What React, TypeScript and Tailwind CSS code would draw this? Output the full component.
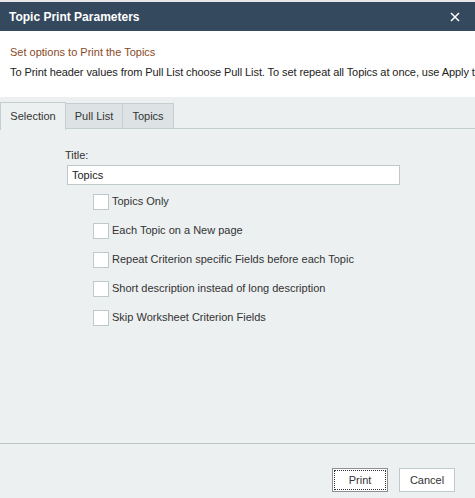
import React from "react";

const font = { fontFamily: '"Liberation Sans", Arial, sans-serif' };

function Check({ label }: { label: string }) {
  return (
    <div className="flex items-center h-[29px]">
      <div className="w-[16px] h-[16px] bg-white border border-[#bfc9cb] mr-[3px]" />
      <span className="text-[11px] text-[#333]">{label}</span>
    </div>
  );
}

export default function App() {
  return (
    <div className="w-[475px] h-[498px] flex flex-col bg-[#ecf0f1] overflow-hidden" style={font}>
      <div className="h-[2px] bg-[#e6e6e6] shrink-0" />
      <div className="h-[29px] bg-[#34495e] flex items-center justify-between pl-[9px] pr-[15px] shrink-0">
        <span className="text-white font-bold text-[12px]">Topic Print Parameters</span>
        <svg width="10" height="10" viewBox="0 0 10 10">
          <path d="M1 1L9 9M9 1L1 9" stroke="white" strokeWidth="1.5" />
        </svg>
      </div>
      <div className="h-[66px] bg-white px-[10px] pt-[14px] shrink-0 whitespace-nowrap overflow-hidden">
        <div className="text-[11px] text-[#8b4a1f] leading-[14px]">Set options to Print the Topics</div>
        <div className="text-[11px] text-[#222] leading-[14px] mt-[6px] tracking-[-0.08px]">
          To Print header values from Pull List choose Pull List. To set repeat all Topics at once, use Apply to all
        </div>
      </div>
      <div className="flex items-end h-[32px] pt-[4px] shrink-0">
        <div className="h-[28px] w-[66px] border border-b-0 border-[#c4cdd0] bg-[#ecf0f1] flex items-center justify-center text-[11px] text-[#333] relative top-[1px]">
          Selection
        </div>
        <div className="h-[26px] w-[57px] border border-l-0 border-[#c4cdd0] bg-[#dde3e5] flex items-center justify-center text-[11px] text-[#333]">
          Pull List
        </div>
        <div className="h-[26px] w-[51px] border border-l-0 border-[#c4cdd0] bg-[#dde3e5] flex items-center justify-center text-[11px] text-[#333]">
          Topics
        </div>
        <div className="flex-1 border-b border-[#c4cdd0]" />
      </div>
      <div className="flex-1 flex flex-col">
        <div className="pl-[65px] pt-[19px]">
          <div className="text-[11px] text-[#333] leading-[14px]">Title:</div>
          <div className="mt-[3px] ml-[2px] w-[333px] h-[20px] bg-white border border-[#bfc9cb] flex items-center px-[4px] text-[11px] text-[#222]">
            Topics
          </div>
          <div className="pl-[28px] pt-[2px]">
            <Check label="Topics Only" />
            <Check label="Each Topic on a New page" />
            <Check label="Repeat Criterion specific Fields before each Topic" />
            <Check label="Short description instead of long description" />
            <Check label="Skip Worksheet Criterion Fields" />
          </div>
        </div>
        <div className="flex-1" />
        <div className="h-[1px] bg-[#bcc5c7]" />
        <div className="h-[54px] flex justify-end items-start pt-[24px] pr-[20px] gap-[11px]">
          <button className="w-[56px] h-[24px] bg-white border border-[#8e8e8e] flex items-center justify-center p-[1px]">
            <span className="w-full h-full border border-dotted border-[#333] flex items-center justify-center text-[11px] text-[#333]">
              Print
            </span>
          </button>
          <button className="w-[56px] h-[24px] bg-white border border-[#bfc9cb] flex items-center justify-center text-[11px] text-[#333]">
            Cancel
          </button>
        </div>
      </div>
    </div>
  );
}
